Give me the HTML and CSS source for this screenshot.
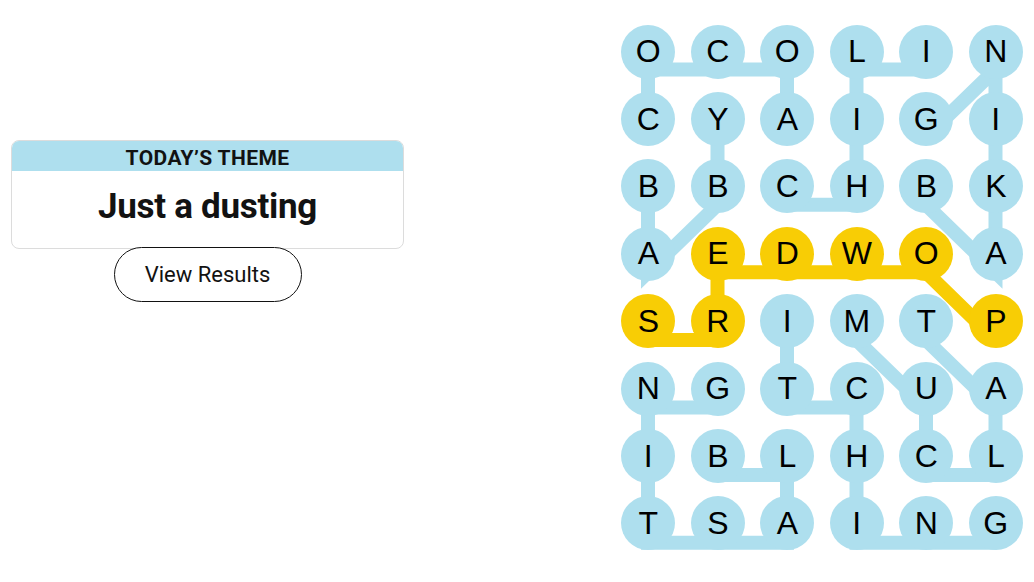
FILE: index.html
```html
<!DOCTYPE html>
<html>
<head>
  <title>Strands</title>
  <link rel="stylesheet" href="styles.css">
</head>
<body>
  <div class="page">
    <div class="sidebar">
      <div class="theme-card">
        <div class="theme-label">TODAY’S THEME</div>
        <div class="theme-text">Just a dusting</div>
      </div>
      <button class="results-btn">View Results</button>
    </div>

    <div class="board">
      <svg class="paths" width="401.5" height="525.8" viewBox="0 0 401.5 525.8">
        <g fill="none" stroke="#aedfee" stroke-width="14" stroke-linejoin="miter">
          <!-- cocoa -->
          <polyline points="27,112.1 27,44.5 96.5,44.5 166,44.5 166,112.1"/>
          <!-- chili -->
          <polyline points="166,179.7 235.5,179.7 235.5,112.1 235.5,44.5 305,44.5"/>
          <!-- baking -->
          <polyline points="305,179.7 374.5,247.3 374.5,179.7 374.5,112.1 374.5,44.5 305,112.1"/>
          <!-- baby -->
          <polyline points="27,179.7 27,247.3 96.5,179.7 96.5,112.1"/>
          <!-- talcum -->
          <polyline points="305,314.9 374.5,382.5 374.5,450.1 305,450.1 305,382.5 235.5,314.9"/>
          <!-- itching -->
          <polyline points="166,314.9 166,382.5 235.5,382.5 235.5,450.1 235.5,517.7 305,517.7 374.5,517.7"/>
          <!-- blasting -->
          <polyline points="96.5,450.1 166,450.1 166,517.7 96.5,517.7 27,517.7 27,450.1 27,382.5 96.5,382.5"/>
        </g>
        <!-- spangram -->
        <polyline points="374.5,314.9 305,247.3 235.5,247.3 166,247.3 96.5,247.3 96.5,314.9 27,314.9"
                  fill="none" stroke="#f8cd05" stroke-width="14" stroke-linejoin="miter"/>
      </svg>

      <div class="letter">O</div>
      <div class="letter">C</div>
      <div class="letter">O</div>
      <div class="letter">L</div>
      <div class="letter">I</div>
      <div class="letter">N</div>

      <div class="letter">C</div>
      <div class="letter">Y</div>
      <div class="letter">A</div>
      <div class="letter">I</div>
      <div class="letter">G</div>
      <div class="letter">I</div>

      <div class="letter">B</div>
      <div class="letter">B</div>
      <div class="letter">C</div>
      <div class="letter">H</div>
      <div class="letter">B</div>
      <div class="letter">K</div>

      <div class="letter">A</div>
      <div class="letter spangram">E</div>
      <div class="letter spangram">D</div>
      <div class="letter spangram">W</div>
      <div class="letter spangram">O</div>
      <div class="letter">A</div>

      <div class="letter spangram">S</div>
      <div class="letter spangram">R</div>
      <div class="letter">I</div>
      <div class="letter">M</div>
      <div class="letter">T</div>
      <div class="letter spangram">P</div>

      <div class="letter">N</div>
      <div class="letter">G</div>
      <div class="letter">T</div>
      <div class="letter">C</div>
      <div class="letter">U</div>
      <div class="letter">A</div>

      <div class="letter">I</div>
      <div class="letter">B</div>
      <div class="letter">L</div>
      <div class="letter">H</div>
      <div class="letter">C</div>
      <div class="letter">L</div>

      <div class="letter">T</div>
      <div class="letter">S</div>
      <div class="letter">A</div>
      <div class="letter">I</div>
      <div class="letter">N</div>
      <div class="letter">G</div>
    </div>
  </div>
</body>
</html>
```

FILE: styles.css
```css
  body {
    font-family: Roboto, "Liberation Sans", sans-serif;
    background-color: #fff;
    color: #121212;
    margin: 0;
    padding: 0;
  }

  .page {
    display: flex;
    justify-content: space-between;
    align-items: flex-start;
    padding: 24.7px 11.2px 0 11px;
  }

  .sidebar {
    width: 393px;
    margin-top: 115.3px;
    display: flex;
    flex-direction: column;
    align-items: center;
  }

  .theme-card {
    width: 100%;
    box-sizing: border-box;
    border: 1px solid #dcdcdc;
    border-radius: 8px;
    overflow: hidden;
    text-align: center;
  }

  .theme-label {
    margin: -1px -1px 0;
    height: 31px;
    box-sizing: border-box;
    padding-top: 6px;
    line-height: 24px;
    background-color: #aedfee;
    font-size: 21px;
    font-weight: 700;
    letter-spacing: 0.4px;
  }

  .theme-text {
    padding: 16px 0 21px;
    line-height: 40px;
    font-size: 35px;
    font-weight: 700;
    letter-spacing: -0.3px;
  }

  .results-btn {
    margin-top: -2px;
    width: 188px;
    height: 55px;
    border: 1px solid #121212;
    border-radius: 28px;
    background-color: #fff;
    color: #121212;
    font-family: Roboto, "Liberation Sans", sans-serif;
    font-size: 22px;
    cursor: pointer;
  }

  .board {
    position: relative;
    display: grid;
    grid-template-columns: repeat(6, 54px);
    grid-template-rows: repeat(8, 54px);
    column-gap: 15.5px;
    row-gap: 13.4px;
  }

  .paths {
    position: absolute;
    top: 0;
    left: 0;
  }

  .letter {
    position: relative;
    display: flex;
    align-items: center;
    justify-content: center;
    border-radius: 50%;
    background-color: #aedfee;
    font-family: "Liberation Sans", Arial, sans-serif;
    font-size: 32px;
    color: #000;
  }

  .letter.spangram {
    background-color: #f8cd05;
  }
```
